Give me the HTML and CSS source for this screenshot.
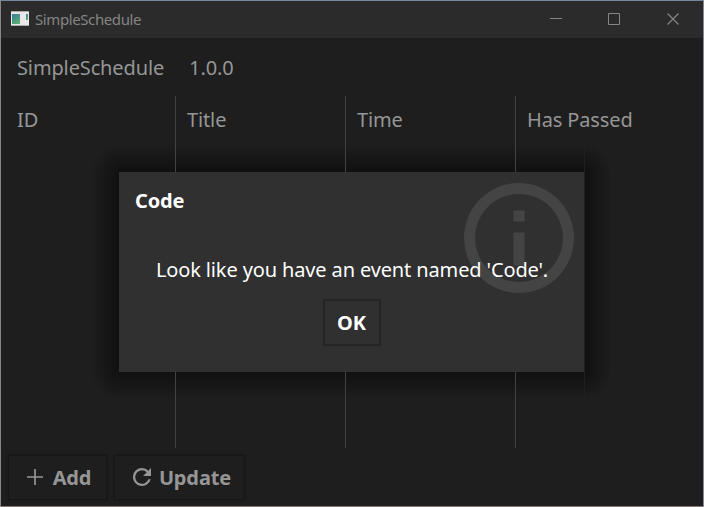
FILE: index.html
```html
<!DOCTYPE html>
<html lang="en">
<head>
<meta charset="utf-8">
<title>SimpleSchedule</title>
<link rel="stylesheet" href="styles.css">
</head>
<body>
<div class="window">
  <header class="titlebar">
    <svg class="app-icon" width="18" height="15" viewBox="0 0 18 15"><defs><linearGradient id="g" x2=".5" y2="1"><stop stop-color="#3d78a0"/><stop offset="1" stop-color="#58ad72"/></linearGradient></defs><path fill="#e8e8e8" d="M0 0h18v15H0z"/><path fill="#aaa" d="M0 0h18v1H0zM0 14h18v1H0z"/><path fill="url(#g)" d="M1 3h8v10H1z"/><path fill="url(#g)" d="M15 3h2v6h-2z"/></svg>
    <span class="app-title">SimpleSchedule</span>
    <svg class="controls" width="130" height="14" viewBox="0 0 130 14" fill="none" stroke="#858585"><path d="M0 6.500h12M58.500 1.500h11v11h-11z"/><path d="m117.500 1.500 11 11m0-11-11 11" stroke-width="1.200"/></svg>
  </header>
  <div class="info"><span>SimpleSchedule</span><span>1.0.0</span></div>
  <main class="table">
    <div class="column">ID</div>
    <div class="column">Title</div>
    <div class="column">Time</div>
    <div class="column">Has Passed</div>
  </main>
  <footer class="actions">
    <button class="button add"><svg width="16" height="16" viewBox="0 0 16 16"><path d="M8 0v16M0 8h16" stroke="currentColor" stroke-width="1.700"/></svg><span>Add</span></button>
    <button class="button update"><svg width="18" height="18" viewBox="4 4 16 16"><path fill="currentColor" d="M17.650 6.350A7.958 7.958 0 0 0 12 4a8 8 0 1 0 7.730 10h-2.080A6 6 0 1 1 12 6c1.660 0 3.140.690 4.220 1.780L13 11h7V4l-2.350 2.350z"/></svg><span>Update</span></button>
  </footer>
  <section class="dialog" role="dialog">
    <svg class="info-icon" width="110" height="110" viewBox="2 2 20 20"><path fill="#444" d="M11 17h2v-6h-2v6zm1-15a10 10 0 1 0 0 20 10 10 0 0 0 0-20zm0 18a8 8 0 1 1 0-16 8 8 0 0 1 0 16zM11 9h2V7h-2v2z"/></svg>
    <h1>Code</h1>
    <p>Look like you have an event named 'Code'.</p>
    <button class="button ok">OK</button>
  </section>
</div>
</body>
</html>
```
FILE: styles.css
```css
* { box-sizing: border-box; }
body { margin: 0; background: #1e1e1e; }
.window {
  position: relative;
  isolation: isolate;
  width: 704px;
  height: 507px;
  display: flex;
  flex-direction: column;
  overflow: hidden;
  border: 1px solid;
  border-color: #7488a0 #858890 #8c7973 #8b8583;
  background: #1e1e1e;
  color: #969696;
  font: 20px/27px "Noto Sans", sans-serif;
  letter-spacing: -.13px;
}
.titlebar {
  height: 37px;
  display: flex;
  align-items: center;
  padding: 0 23px 0 10px;
  background: #2b2b2b;
}
.app-icon { margin-bottom: 2px; }
.app-title { margin: -1px 0 0 6px; font-size: 15px; line-height: 20px; letter-spacing: -.4px; color: #858585; }
.controls { margin: 0 0 1px auto; }
.info { height: 58px; display: flex; gap: 25px; padding: 16px 16px 0; white-space: nowrap; }
.table { height: 352px; display: grid; grid-template-columns: 174px 170px 170px 1fr; }
.column { padding: 10px 0 0 11px; border-left: 1px solid #424242; }
.column:first-child { padding-left: 16px; border: 0; }
.actions { display: flex; gap: 10px; padding: 8px 8px 0; }
.button {
  height: 43px;
  display: flex;
  align-items: center;
  justify-content: center;
  gap: 10px;
  padding: 0;
  border: 0;
  background: #1e1e1e;
  color: #969696;
  font: bold 20px/27px "Noto Sans", sans-serif;
  letter-spacing: -.13px;
  box-shadow: 0 0 0 1px #161616, 0 0 2px 1px #161616;
}
.add { width: 97px; padding-left: 3px; }
.update { width: 129px; padding-left: 5px; gap: 8px; }
.add + .update { margin-left: -1px; }
.button svg { position: relative; top: -1px; }
.dialog {
  position: absolute;
  left: 118px;
  top: 171px;
  width: 465px;
  height: 200px;
  background: #303030;
  color: #fff;
}
.dialog::before {
  content: "";
  position: absolute;
  z-index: -1;
  inset: -28px;
  background:
    radial-gradient(circle at 100% 100%, #0007, #0000 28px) 0 0 / 28px 28px,
    radial-gradient(circle at 0 100%, #0007, #0000 28px) 100% 0 / 28px 28px,
    radial-gradient(circle at 100% 0, #0007, #0000 28px) 0 100% / 28px 28px,
    radial-gradient(circle at 0 0, #0007, #0000 28px) 100% 100% / 28px 28px,
    linear-gradient(to top, #0007, #0000) 28px 0 / 465px 28px,
    linear-gradient(#0007, #0000) 28px 100% / 465px 28px,
    linear-gradient(to left, #0007, #0000) 0 28px / 28px 200px,
    linear-gradient(to right, #0007, #0000) 100% 28px / 28px 200px;
  background-repeat: no-repeat;
}
.dialog::after {
  content: "";
  position: absolute;
  left: 465px;
  top: -28px;
  width: 1px;
  height: 256px;
  background: linear-gradient(#1e1e1e, #202020 28px, #202020 228px, #1e1e1e);
}
.info-icon { position: absolute; right: 10px; top: 11px; }
.dialog h1 { position: relative; margin: 0; padding: 15px 16px 0; font: bold 20px/27px "Noto Sans", sans-serif; }
.dialog p { position: relative; margin: 42px 0 0; padding-left: 1px; text-align: center; white-space: nowrap; }
.ok { position: relative; width: 58px; height: 47px; margin: 16px auto 0; background: #303030; color: #fff; box-shadow: inset 0 0 0 2px #252525; }
```
